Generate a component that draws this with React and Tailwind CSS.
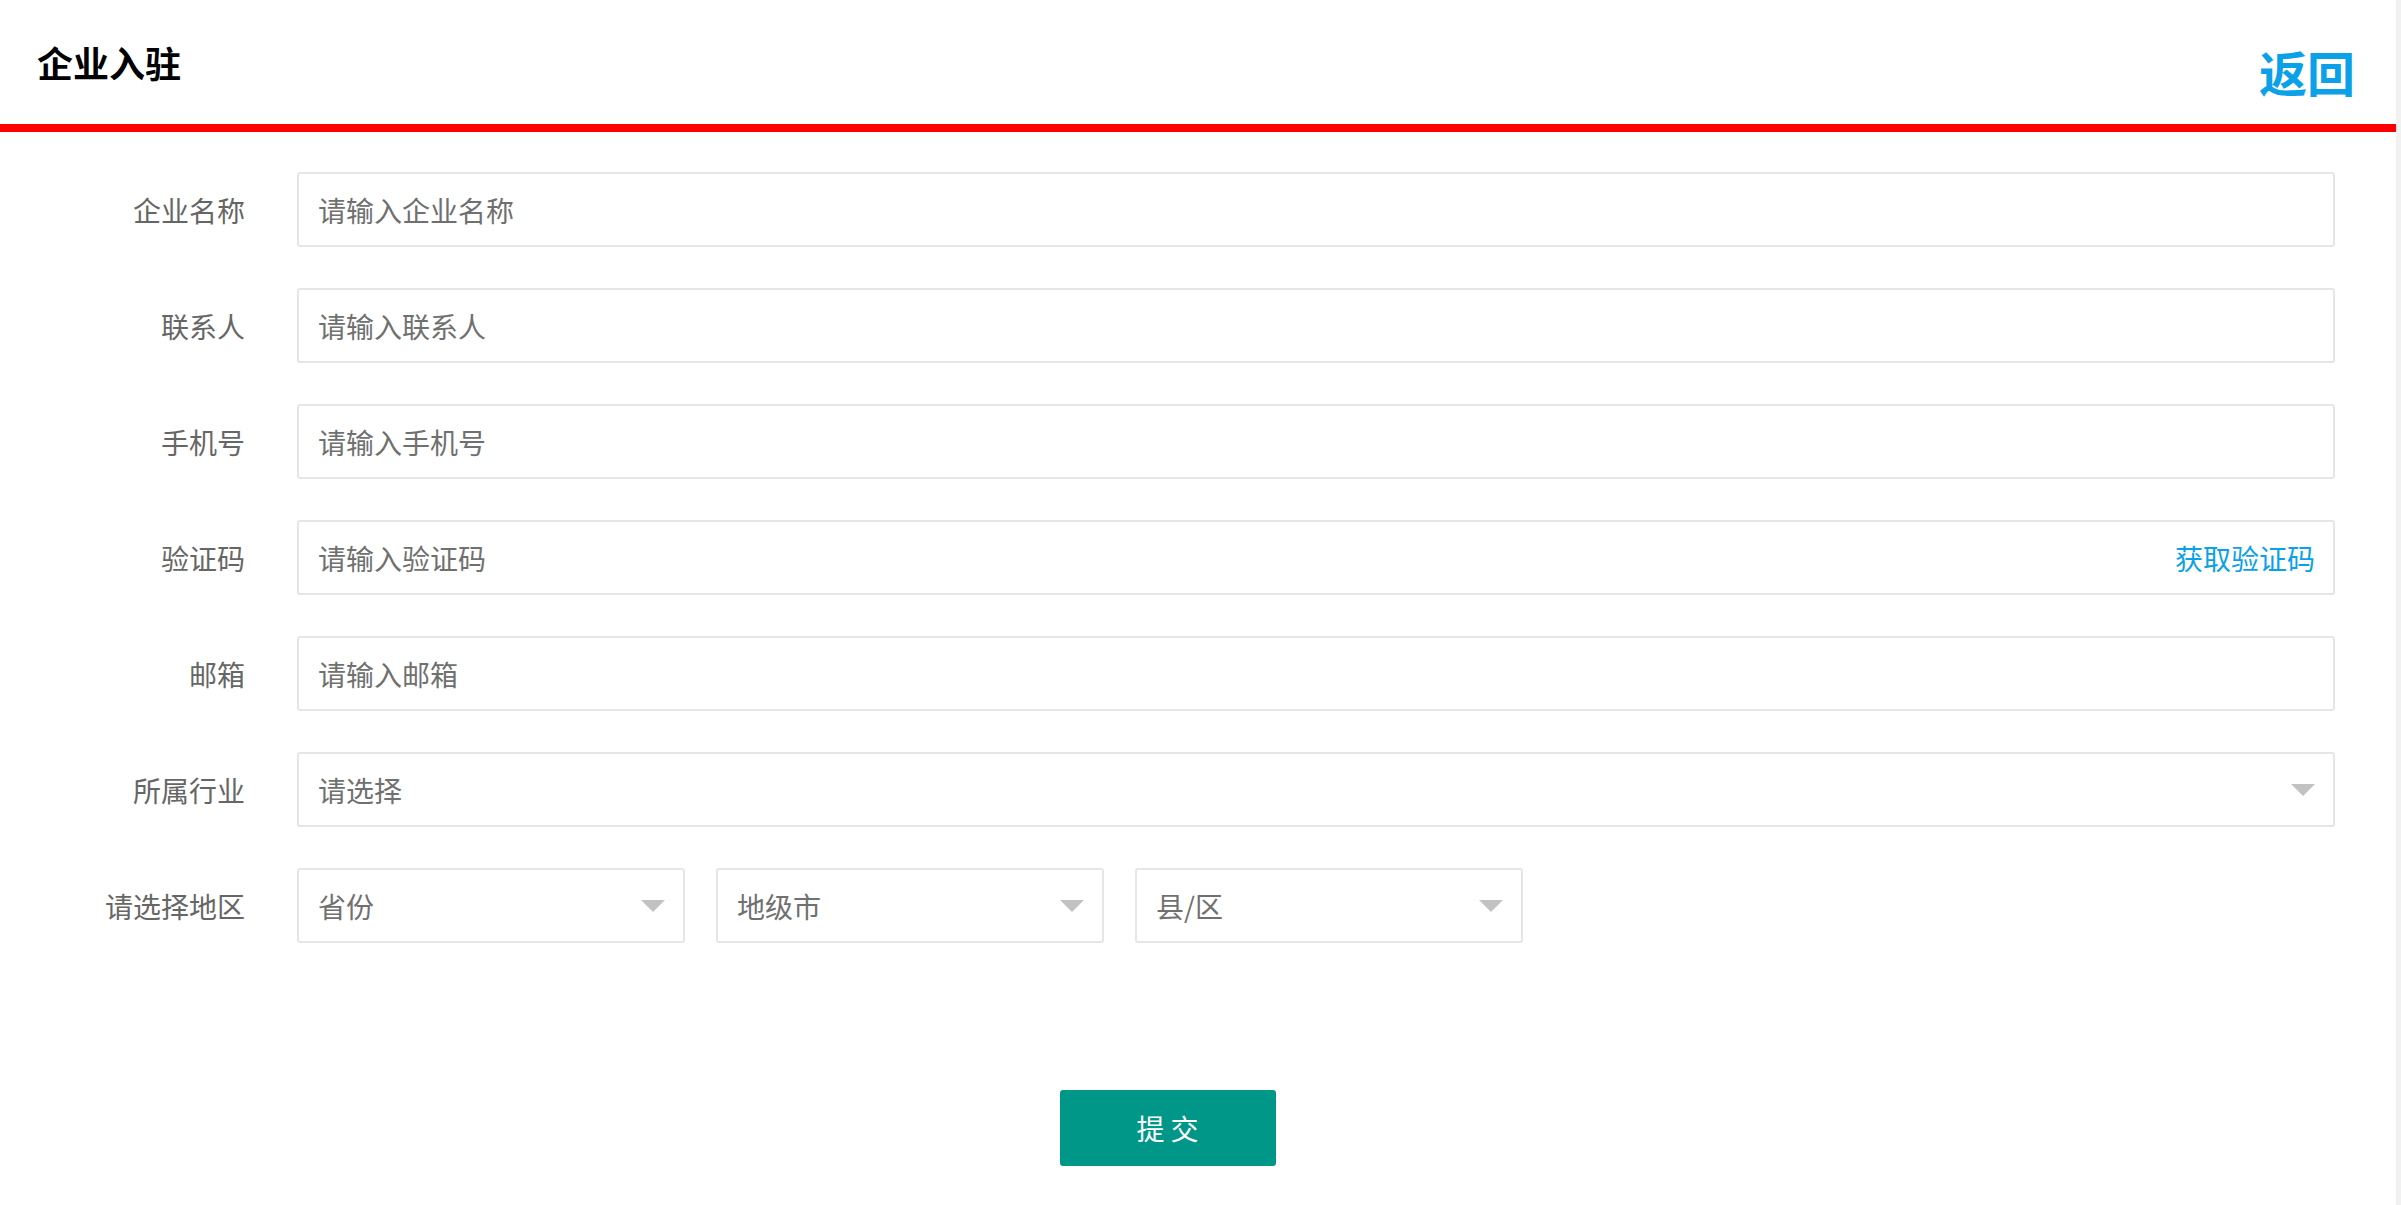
import React from "react";

const FONT = "font-['Microsoft_YaHei','Noto_Sans_CJK_SC',sans-serif]";

function Caret() {
  return (
    <span className="block w-0 h-0 border-l-[12px] border-r-[12px] border-t-[12px] border-l-transparent border-r-transparent border-t-[#c2c2c2]" />
  );
}

function Row({ label, children }) {
  return (
    <div className="flex items-center h-[75px]">
      <div className="w-[245px] shrink-0 text-right text-[28px] leading-[28px] text-[#666666]">{label}</div>
      <div className="ml-[52px] flex-1 min-w-0">{children}</div>
    </div>
  );
}

function TextBox({ placeholder, right }) {
  return (
    <div className="h-[75px] flex items-center border-2 border-[#e6e6e6] rounded-[3px] bg-white pl-[19px] pr-[18px]">
      <input
        className={`flex-1 min-w-0 outline-none bg-transparent text-[28px] leading-[28px] text-[#333] placeholder:text-[#707070] ${FONT}`}
        placeholder={placeholder}
      />
      {right}
    </div>
  );
}

function SelectBox({ text, className = "" }) {
  return (
    <div className={`h-[75px] flex items-center justify-between border-2 border-[#e6e6e6] rounded-[3px] bg-white pl-[19px] pr-[18px] ${className}`}>
      <span className="text-[28px] leading-[28px] text-[#707070]">{text}</span>
      <Caret />
    </div>
  );
}

export default function App() {
  return (
    <div className={`flex w-full h-[1205px] bg-white overflow-hidden ${FONT}`}>
      <div className="flex-1 min-w-0 flex flex-col">
        <header className="h-[124px] flex justify-between items-start pl-[37px] pr-[41px]">
          <h1 className="mt-[44px] text-[36px] leading-[36px] font-bold text-black">企业入驻</h1>
          <a className="mt-[47px] text-[48px] leading-[48px] font-bold text-[#0ba1e9] cursor-pointer">返回</a>
        </header>
        <div className="h-[8px] bg-[#ff0000]" />
        <div className="w-[2335px] pt-[40px] flex flex-col">
          <div className="flex flex-col gap-[41px]">
            <Row label="企业名称"><TextBox placeholder="请输入企业名称" /></Row>
            <Row label="联系人"><TextBox placeholder="请输入联系人" /></Row>
            <Row label="手机号"><TextBox placeholder="请输入手机号" /></Row>
            <Row label="验证码">
              <TextBox
                placeholder="请输入验证码"
                right={<span className="text-[28px] leading-[28px] text-[#0ba1e9] cursor-pointer">获取验证码</span>}
              />
            </Row>
            <Row label="邮箱"><TextBox placeholder="请输入邮箱" /></Row>
            <Row label="所属行业"><SelectBox text="请选择" /></Row>
            <Row label="请选择地区">
              <div className="flex gap-[31px]">
                <SelectBox text="省份" className="w-[388px]" />
                <SelectBox text="地级市" className="w-[388px]" />
                <SelectBox text="县/区" className="w-[388px]" />
              </div>
            </Row>
          </div>
          <div className="flex justify-center mt-[147px]">
            <button className="w-[216px] h-[76px] rounded-[3px] bg-[#009688] text-white text-[28px] leading-[28px] tracking-[6px] pl-[6px]">提交</button>
          </div>
        </div>
      </div>
      <div className="w-[5px] shrink-0 bg-[#f1f1f1]" />
    </div>
  );
}
